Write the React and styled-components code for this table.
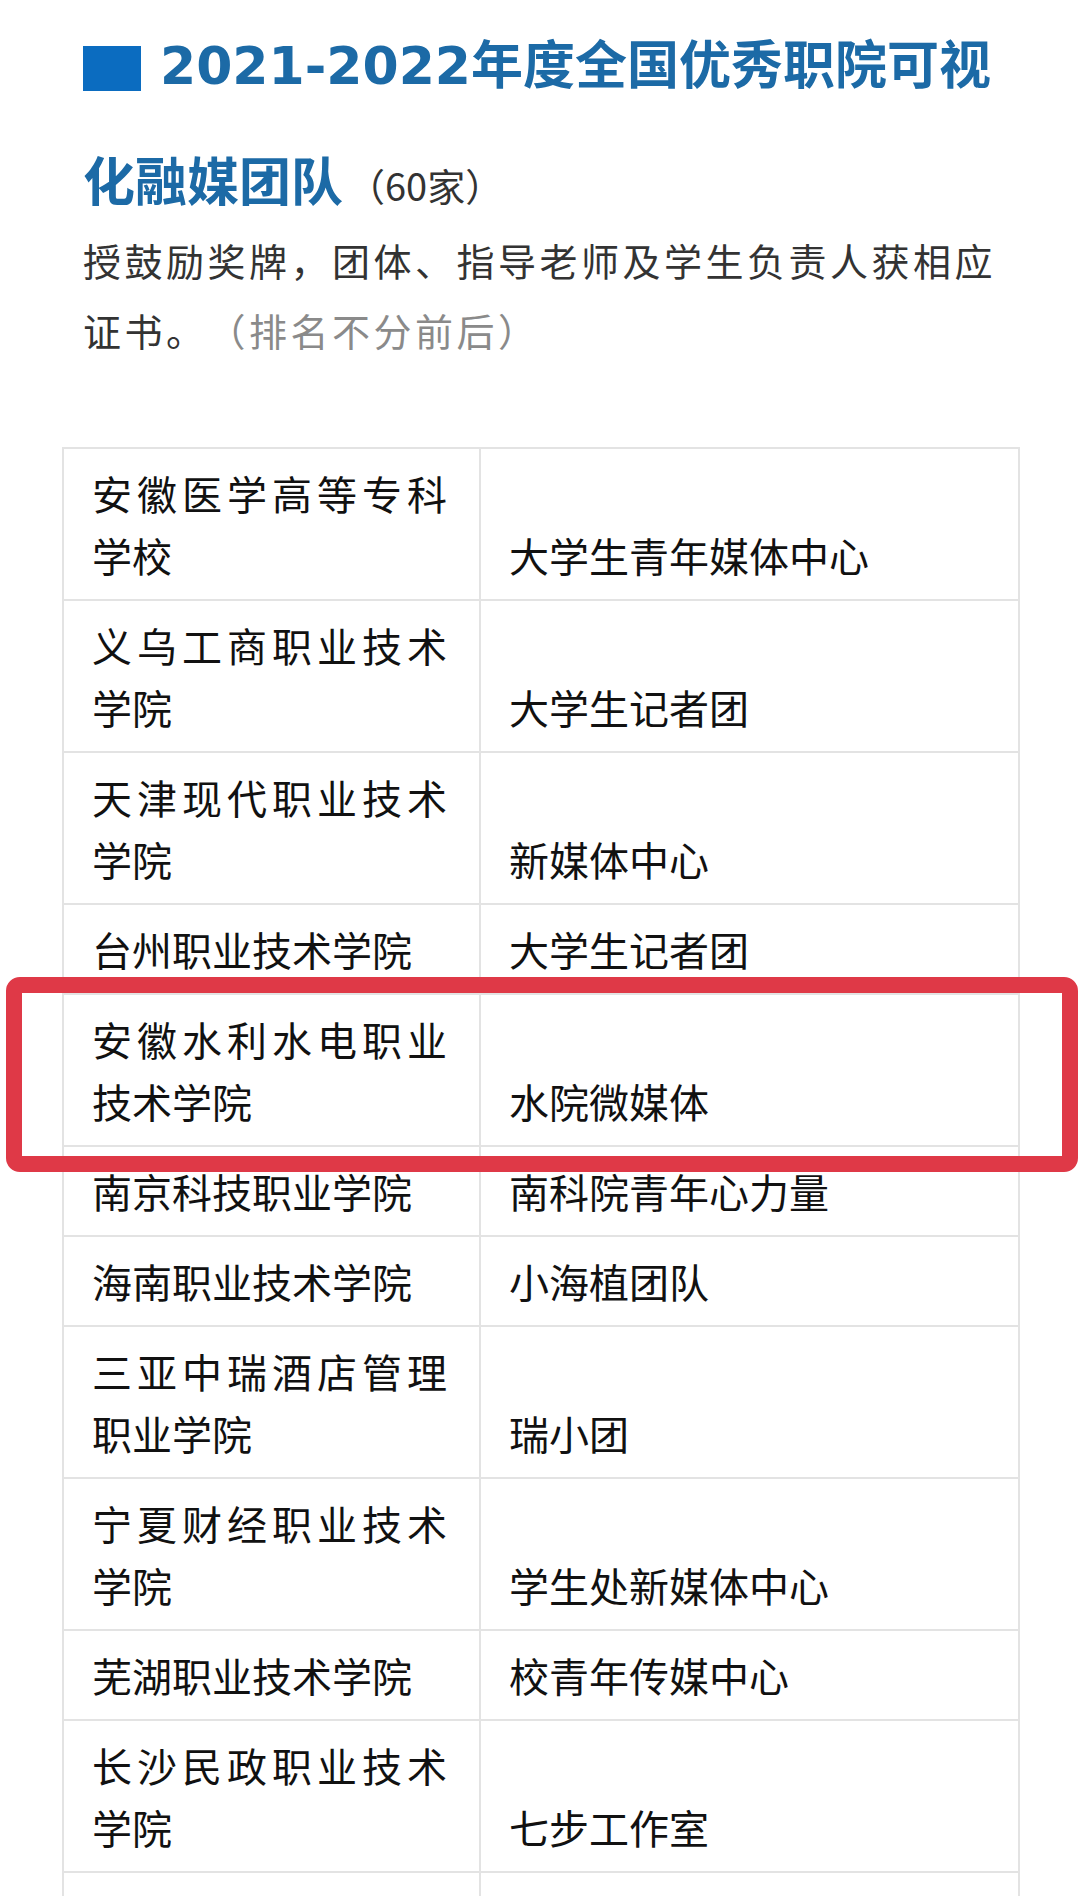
import React from "react";
import styled, { createGlobalStyle } from "styled-components";

const Global = createGlobalStyle`
  html, body { margin: 0; padding: 0; background: #fff; }
  body {
    font-family: "Noto Sans CJK SC", "Noto Sans", sans-serif;
    -webkit-font-smoothing: antialiased;
    text-spacing-trim: space-all;
  }
`;

const Page = styled.div`
  position: relative;
  width: 1080px;
  height: 1896px;
  overflow: hidden;
  box-sizing: border-box;
  padding-top: 3px;
  background: #fff;
`;

const Header = styled.header`
  padding: 0 40px 0 83px;
`;

const Title = styled.h2`
  margin: 0 0 -12px;
  font-size: 52px;
  line-height: 117px;
  font-weight: 700;
  color: #1c6aa6;
  white-space: nowrap;
`;

const Square = styled.span`
  display: inline-block;
  width: 58px;
  height: 45px;
  background: #0b6cc0;
  vertical-align: -7px;
  margin-right: 19px;
`;

const Year = styled.span`
  font-family: "DejaVu Sans", sans-serif;
  line-height: 1;
`;

const Count = styled.span`
  font-size: 38px;
  font-weight: 400;
  line-height: 1;
  color: #333;
  margin-left: 4px;
`;

const Lead = styled.p`
  margin: 0;
  font-size: 38px;
  line-height: 70px;
  letter-spacing: 3.5px;
  color: #333;
  white-space: nowrap;
`;

const Muted = styled.span`
  color: #8a8a8a;
`;

const Table = styled.table`
  margin: 82px 0 0 62px;
  width: 956px;
  border-collapse: collapse;
  table-layout: fixed;
  font-size: 40px;
  line-height: 62px;
  color: #111;
`;

const Col = styled.col`
  width: ${(p) => p.$w}px;
`;

const Row = styled.tr`
  height: ${(p) => (p.$h ? `${p.$h}px` : "auto")};
`;

const NameCell = styled.td`
  border: 2px solid #e3e3e3;
  padding: 13px 32px 13px 28px;
  vertical-align: top;
  text-align: justify;
`;

const TeamCell = styled.td`
  border: 2px solid #e3e3e3;
  padding: 13px 28px;
  vertical-align: bottom;
  text-align: left;
`;

const Highlight = styled.div`
  position: absolute;
  left: 6px;
  top: 977px;
  width: 1072px;
  height: 195px;
  box-sizing: border-box;
  border: 16px solid #df3947;
  border-radius: 14px;
  pointer-events: none;
`;

const rows = [
  ["安徽医学高等专科学校", "大学生青年媒体中心"],
  ["义乌工商职业技术学院", "大学生记者团"],
  ["天津现代职业技术学院", "新媒体中心"],
  ["台州职业技术学院", "大学生记者团"],
  ["安徽水利水电职业技术学院", "水院微媒体"],
  ["南京科技职业学院", "南科院青年心力量"],
  ["海南职业技术学院", "小海植团队"],
  ["三亚中瑞酒店管理职业学院", "瑞小团"],
  ["宁夏财经职业技术学院", "学生处新媒体中心"],
  ["芜湖职业技术学院", "校青年传媒中心"],
  ["长沙民政职业技术学院", "七步工作室"],
];

export default function App() {
  return (
    <>
      <Global />
      <Page>
        <Header>
          <Title>
            <Square />
            <Year>2021-2022</Year>年度全国优秀职院可视
            <br />
            化融媒团队<Count>（60家）</Count>
          </Title>
          <Lead>
            授鼓励奖牌，团体、指导老师及学生负责人获相应
            <br />
            证书。<Muted>（排名不分前后）</Muted>
          </Lead>
        </Header>
        <Table>
          <colgroup>
            <Col $w={417} />
            <Col $w={539} />
          </colgroup>
          <tbody>
            {rows.map(([name, team]) => (
              <Row key={name}>
                <NameCell>{name}</NameCell>
                <TeamCell>{team}</TeamCell>
              </Row>
            ))}
            <Row $h={120}>
              <NameCell />
              <TeamCell />
            </Row>
          </tbody>
        </Table>
        <Highlight />
      </Page>
    </>
  );
}
